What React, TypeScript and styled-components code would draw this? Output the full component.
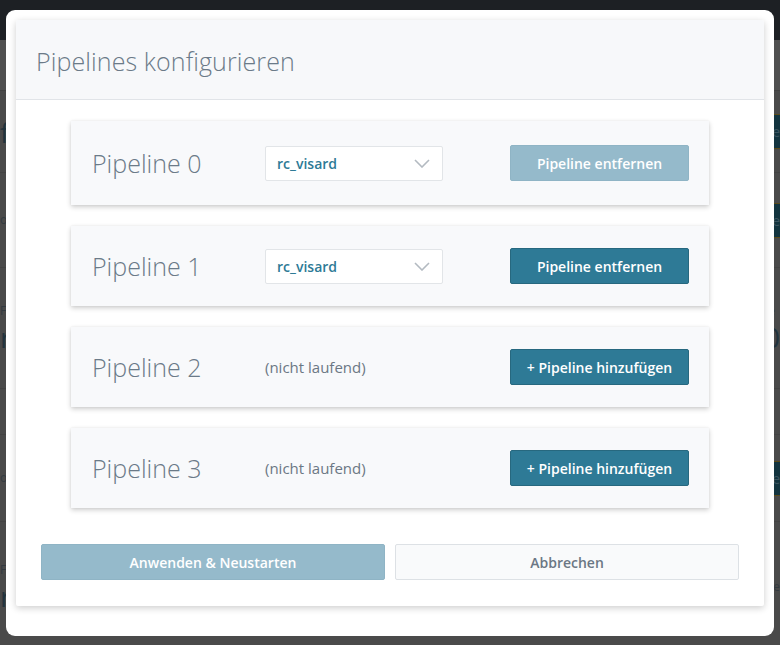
import React from "react";
import styled, { createGlobalStyle } from "styled-components";

const Global = createGlobalStyle`
  html, body { margin: 0; padding: 0; }
  body {
    width: 780px;
    height: 645px;
    overflow: hidden;
    background: #4a4a4a;
    font-family: "Open Sans", "Liberation Sans", sans-serif;
  }
`;

/* ---------- dimmed page behind the dialog ---------- */

const Page = styled.div`
  display: flex;
  flex-direction: column;
  height: 645px;
  background: #4a4a4a;
`;

const NavBar = styled.div`
  height: 40px;
  background: #1d2024;
  flex: none;
`;

const SubBar = styled.div`
  height: 50px;
  background: #505050;
  border-bottom: 1px solid #424242;
  flex: none;
`;

const PageRow = styled.div<{ $h: number }>`
  height: ${(p) => p.$h}px;
  flex: none;
  display: flex;
  align-items: center;
  justify-content: space-between;
  border-bottom: 1px solid #434343;
`;

const PageLabel = styled.div`
  display: flex;
  flex-direction: column;
  gap: 6px;
  color: #2e3a44;
  line-height: 1;
`;

const PageSmall = styled.span`
  font-size: 12px;
  color: #333a40;
`;

const PageBig = styled.span`
  font-size: 28px;
  color: #22333d;
`;

const PageButton = styled.div`
  width: 60px;
  height: 33px;
  background: #13343f;
  border-top: 1px solid #5a4a1a;
  border-bottom: 1px solid #5a4a1a;
  color: #3c5560;
  font-size: 14px;
  display: flex;
  align-items: center;
  justify-content: flex-end;
`;

/* ---------- dialog ---------- */

const Overlay = styled.div`
  position: fixed;
  inset: 0;
  padding: 10px 6px 9px 6px;
  display: flex;
`;

const Frame = styled.div`
  flex: 1;
  background: #ffffff;
  border-radius: 9px;
  padding: 10px 10px 30px 10px;
  display: flex;
`;

const Panel = styled.div`
  flex: 1;
  display: flex;
  flex-direction: column;
  background: #ffffff;
  border-radius: 2px;
  box-shadow: 0 2px 7px rgba(0, 0, 0, 0.2);
  overflow: hidden;
`;

const Header = styled.div`
  height: 80px;
  flex: none;
  background: #f7f8fa;
  border-bottom: 1px solid #e1e4e8;
  display: flex;
  align-items: center;
  padding: 3px 20px 0;
  box-sizing: border-box;
`;

const Title = styled.h1`
  margin: 0;
  font-size: 25px;
  font-weight: 300;
  color: #6b7a88;
  letter-spacing: 0.1px;
`;

const Body = styled.div`
  flex: 1;
  display: flex;
  flex-direction: column;
  padding: 21px 25px 26px;
`;

const CardList = styled.div`
  display: flex;
  flex-direction: column;
  gap: 21px;
  margin: 0 30px;
`;

const Card = styled.div<{ $h: number }>`
  height: ${(p) => p.$h}px;
  background: #f8f9fb;
  box-shadow: 0 2px 5px rgba(0, 0, 0, 0.2), 0 0 2px rgba(0, 0, 0, 0.06);
  display: grid;
  grid-template-columns: 173px 178px 1fr 179px;
  align-items: center;
  padding: 0 20px 0 21px;
`;

const CardTitle = styled.div`
  font-size: 25px;
  font-weight: 300;
  color: #6b7a88;
`;

const Select = styled.div`
  height: 35px;
  box-sizing: border-box;
  background: #ffffff;
  border: 1px solid #e2e5e8;
  border-radius: 2px;
  display: flex;
  align-items: center;
  justify-content: space-between;
  padding: 0 12px 0 11px;
  font-size: 14px;
  font-weight: 600;
  color: #2e7a96;
`;

const Status = styled.div`
  font-size: 15px;
  color: #6b7784;
`;

const Button = styled.button<{ $variant: "primary" | "disabled" | "secondary" }>`
  height: 36px;
  box-sizing: border-box;
  border-radius: 2px;
  font-family: "Open Sans", "Liberation Sans", sans-serif;
  font-size: 14px;
  font-weight: 600;
  padding: 0 10px;
  cursor: pointer;
  background: ${(p) =>
    p.$variant === "primary" ? "#2e7a96" : p.$variant === "disabled" ? "#95bacb" : "#f9fafb"};
  color: ${(p) => (p.$variant === "secondary" ? "#6b7784" : "#ffffff")};
  border: 1px solid
    ${(p) =>
      p.$variant === "primary" ? "#27687f" : p.$variant === "disabled" ? "#8fb4c5" : "#dde1e5"};
`;

const Footer = styled.div`
  margin-top: 36px;
  display: grid;
  grid-template-columns: 1fr 1fr;
  gap: 10px;
`;

const Chevron = () => (
  <svg width="16" height="9" viewBox="0 0 16 9" fill="none">
    <polyline points="1,1 8,8 15,1" stroke="#b3bac1" strokeWidth="1.6" />
  </svg>
);

type Pipeline = { name: string; running: boolean; removable: boolean; h: number };

const pipelines: Pipeline[] = [
  { name: "Pipeline 0", running: true, removable: false, h: 84 },
  { name: "Pipeline 1", running: true, removable: true, h: 80 },
  { name: "Pipeline 2", running: false, removable: false, h: 80 },
  { name: "Pipeline 3", running: false, removable: false, h: 80 },
];

export default function App() {
  return (
    <>
      <Global />
      <Page>
        <NavBar />
        <SubBar />
        <PageRow $h={81}>
          <PageLabel>
            <PageBig>f</PageBig>
          </PageLabel>
          <PageButton>ne</PageButton>
        </PageRow>
        <PageRow $h={94}>
          <PageLabel>
            <PageSmall>o</PageSmall>
          </PageLabel>
          <PageButton>ne</PageButton>
        </PageRow>
        <PageRow $h={120}>
          <PageLabel>
            <PageSmall>F</PageSmall>
            <PageBig>r</PageBig>
          </PageLabel>
          <PageLabel>
            <PageSmall>te</PageSmall>
            <PageBig>0</PageBig>
          </PageLabel>
        </PageRow>
        <PageRow $h={45} />
        <PageRow $h={86}>
          <PageLabel>
            <PageSmall>o</PageSmall>
          </PageLabel>
          <PageButton>ne</PageButton>
        </PageRow>
        <PageRow $h={129}>
          <PageLabel>
            <PageSmall>F</PageSmall>
            <PageBig>r</PageBig>
          </PageLabel>
          <PageLabel>
            <PageSmall>te</PageSmall>
          </PageLabel>
        </PageRow>
      </Page>

      <Overlay>
        <Frame>
          <Panel>
            <Header>
              <Title>Pipelines konfigurieren</Title>
            </Header>
            <Body>
              <CardList>
                {pipelines.map((p) => (
                  <Card key={p.name} $h={p.h}>
                    <CardTitle>{p.name}</CardTitle>
                    {p.running ? (
                      <Select>
                        <span>rc_visard</span>
                        <Chevron />
                      </Select>
                    ) : (
                      <Status>(nicht laufend)</Status>
                    )}
                    <span />
                    {p.running ? (
                      <Button $variant={p.removable ? "primary" : "disabled"}>
                        Pipeline entfernen
                      </Button>
                    ) : (
                      <Button $variant="primary">+ Pipeline hinzufügen</Button>
                    )}
                  </Card>
                ))}
              </CardList>
              <Footer>
                <Button $variant="disabled">Anwenden &amp; Neustarten</Button>
                <Button $variant="secondary">Abbrechen</Button>
              </Footer>
            </Body>
          </Panel>
        </Frame>
      </Overlay>
    </>
  );
}
